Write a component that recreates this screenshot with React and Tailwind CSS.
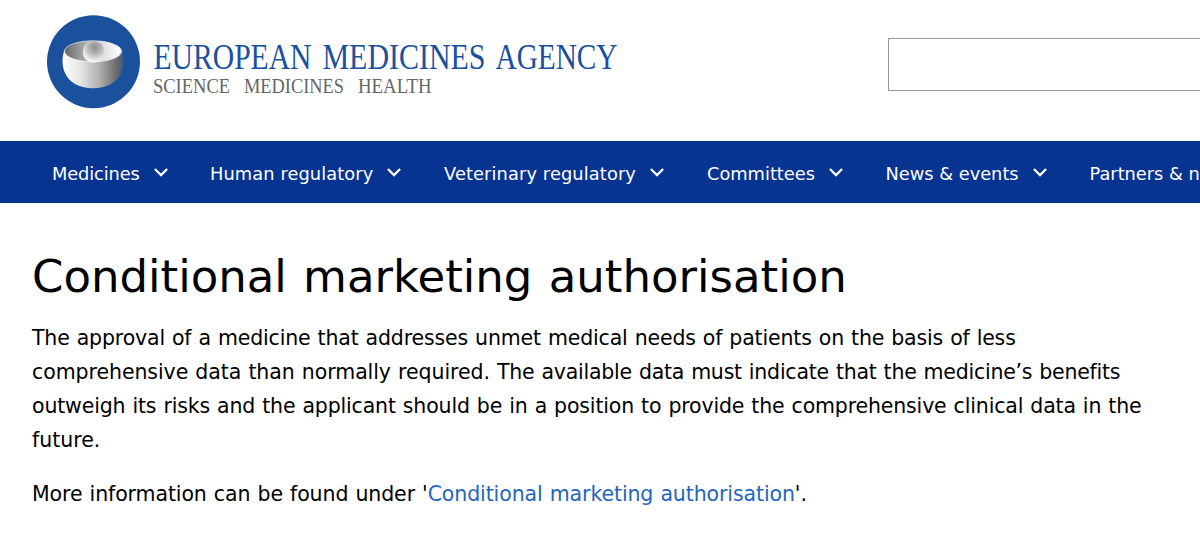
import React from 'react';

const navItems = [
  { label: 'Medicines', style: 'w-[158px] tracking-[-0.12px]' },
  { label: 'Human regulatory', style: 'w-[234px] tracking-[0.1px]' },
  { label: 'Veterinary regulatory', style: 'w-[263px] tracking-[0.12px]' },
  { label: 'Committees', style: 'w-[178.5px]' },
  { label: 'News & events', style: 'w-[204px]' },
  { label: 'Partners & n', style: 'w-[120px]' },
];

function Logo() {
  return (
    <svg className="block shrink-0 w-[640px] h-[141px]" viewBox="0 0 640 141">
      <defs>
        <linearGradient id="bowl" x1="0" x2="1">
          <stop offset="0" stopColor="#ffffff" />
          <stop offset="0.3" stopColor="#e4e4e4" />
          <stop offset="0.6" stopColor="#b0b0b0" />
          <stop offset="0.88" stopColor="#6b6b6b" />
          <stop offset="1" stopColor="#3d5884" />
        </linearGradient>
        <linearGradient id="inside" x1="0" x2="1">
          <stop offset="0" stopColor="#666666" />
          <stop offset="0.35" stopColor="#aaaaaa" />
          <stop offset="0.7" stopColor="#e2e2e2" />
          <stop offset="1" stopColor="#ffffff" />
        </linearGradient>
        <radialGradient id="ball" cx="0.56" cy="0.3" r="0.7">
          <stop offset="0" stopColor="#8c8c8c" />
          <stop offset="0.5" stopColor="#bdbdbd" />
          <stop offset="1" stopColor="#ffffff" />
        </radialGradient>
      </defs>
      <circle cx="93.5" cy="61.7" r="46.5" fill="#1b519c" />
      <path d="M64.5 50C62 56 61.8 65 64.5 72C69 83 80 88.300 93 88.300C106 88.300 117 83 121.500 72C124.300 65 124.3 56 121.5 50Z" fill="url(#bowl)" />
      <ellipse cx="93" cy="51.3" rx="28.5" ry="10.5" fill="url(#inside)" stroke="#ffffff" strokeWidth="0.6" />
      <circle cx="93.7" cy="51.7" r="10.8" fill="url(#ball)" />
      <g fill="#1b519c" className="font-['Liberation_Serif',serif] text-[35px]">
        <text x="153.5" y="68.8" textLength="158" lengthAdjust="spacingAndGlyphs">EUROPEAN</text>
        <text x="322.5" y="68.8" textLength="163" lengthAdjust="spacingAndGlyphs">MEDICINES</text>
        <text x="495.5" y="68.8" textLength="122" lengthAdjust="spacingAndGlyphs">AGENCY</text>
      </g>
      <g fill="#666666" className="font-['Liberation_Serif',serif] text-[20px]">
        <text x="153" y="92.5" textLength="77" lengthAdjust="spacingAndGlyphs">SCIENCE</text>
        <text x="244" y="92.5" textLength="100" lengthAdjust="spacingAndGlyphs">MEDICINES</text>
        <text x="358" y="92.5" textLength="73.5" lengthAdjust="spacingAndGlyphs">HEALTH</text>
      </g>
    </svg>
  );
}

function Chevron() {
  return (
    <svg className="w-[14px] h-[9px] shrink-0 -mt-[4px]" viewBox="0 0 14 9" fill="none" stroke="currentColor" strokeWidth="2.2">
      <path d="M0.9 1L7 7.1L13.1 1" />
    </svg>
  );
}

function App() {
  return (
    <div className="w-full h-[543px] overflow-hidden bg-white text-black font-['DejaVu_Sans',sans-serif]">
      <header className="flex h-[141px] overflow-hidden">
        <Logo />
        <input
          type="text"
          aria-label="Search"
          className="ml-[248px] mt-[38px] h-[53px] w-[400px] shrink-0 border border-[#999999] bg-white outline-none"
        />
      </header>

      <nav className="flex items-center h-[62px] pt-[4px] pl-[52px] overflow-hidden bg-[#073391] border-y border-[#063083] text-white text-[17.8px] whitespace-nowrap">
        {navItems.map((item) => (
          <a key={item.label} href="#" className={`flex items-center gap-[14px] shrink-0 ${item.style}`}>
            {item.label}
            <Chevron />
          </a>
        ))}
      </nav>

      <main className="pl-8 pt-[43px]">
        <h1 className="text-[45px] leading-[62px] [word-spacing:2px] whitespace-nowrap">Conditional marketing authorisation</h1>
        <div className="mt-[13px] text-[20.5px] leading-[34px] tracking-[-0.16px] [word-spacing:0.7px] whitespace-nowrap">
          <p>
            The approval of a medicine that addresses unmet medical needs of patients on the basis of less
            <br />
            <span className="tracking-[-0.07px]">comprehensive data than normally required. </span>
            <span className="tracking-[-0.23px]">The available data must indicate that the medicine’s benefits</span>
            <br />
            outweigh its risks and the applicant should be in a position to provide the comprehensive clinical data in the
            <br />
            <span className="tracking-normal">future.</span>
          </p>
          <p className="mt-5 tracking-[-0.1px]">
            More information can be found under &apos;
            <a href="#" className="text-[#2465bd]">Conditional marketing authorisation</a>
            &apos;.
          </p>
        </div>
      </main>
    </div>
  );
}

export default App;
